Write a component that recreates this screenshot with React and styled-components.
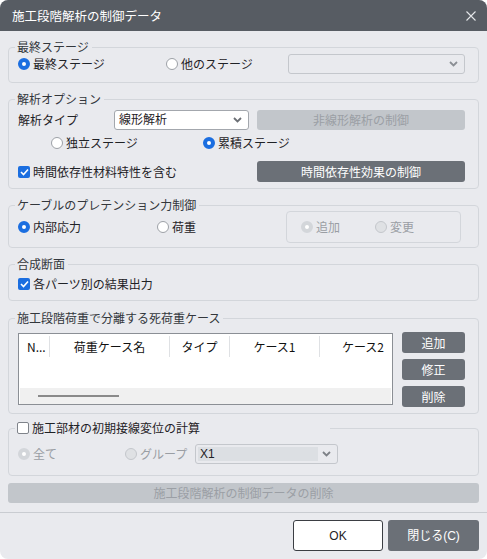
import React from "react";
import styled, { createGlobalStyle, css } from "styled-components";

const GlobalStyle = createGlobalStyle`
  html, body {
    margin: 0;
    background: #ffffff;
  }
  body {
    font-family: "Noto Sans CJK JP", "Noto Sans", sans-serif;
    font-size: 12px;
    line-height: 16px;
    color: #1f2226;
  }
`;

const Dialog = styled.div`
  width: 487px;
  height: 559px;
  background: #e9eaee;
  border-radius: 8px;
  overflow: hidden;
  display: flex;
  flex-direction: column;
`;

const TitleBar = styled.div`
  height: 31px;
  flex: none;
  background: #575c63;
  color: #ffffff;
  display: flex;
  align-items: center;
  justify-content: space-between;
  padding: 0 11px 0 12px;
  font-size: 12.5px;
`;

const Body = styled.div`
  padding: 9px 8px 9px;
  display: flex;
  flex-direction: column;
`;

// group box with caption on the border
const Group = styled.fieldset`
  margin: ${(p) => p.$mt || 0}px 0 0;
  padding: 0 13px ${(p) => p.$pb || 0}px 9px;
  border: 1px solid #d3d6db;
  border-radius: 4px;
  min-width: 0;
`;

const Caption = styled.legend`
  margin-left: -3px;
  padding: 0 3px 0 2px;
  line-height: 14px;
  color: #33373c;
  width: ${(p) => (p.$w ? `${p.$w}px` : "auto")};
  box-sizing: border-box;
  display: flex;
  align-items: center;
  gap: 3px;
`;

const Row = styled.div`
  display: grid;
  grid-template-columns: ${(p) => p.$cols || "1fr"};
  column-gap: ${(p) => p.$gap || 0}px;
  align-items: ${(p) => p.$align || "center"};
  height: ${(p) => p.$h}px;
  margin-top: ${(p) => p.$mt || 0}px;
  padding-left: ${(p) => p.$pl || 0}px;
`;

const Option = styled.span`
  display: inline-flex;
  align-items: center;
  gap: 3px;
  white-space: nowrap;
  color: ${(p) => (p.$disabled ? "#9a9ea4" : "#1f2226")};
`;

const Dot = styled.span`
  box-sizing: border-box;
  width: 12px;
  height: 12px;
  border-radius: 50%;
  flex: none;
  ${(p) =>
    p.$on
      ? css`
          border: 4px solid ${p.$disabled ? "#d3d6da" : "#1b6ee0"};
          background: #ffffff;
        `
      : css`
          border: 1px solid ${p.$disabled ? "#c4c7cc" : "#9da1a7"};
          background: ${p.$disabled ? "#dfe1e4" : "#ffffff"};
        `}
`;

const Box = styled.span`
  box-sizing: border-box;
  width: 12px;
  height: 12px;
  border-radius: 2px;
  flex: none;
  display: flex;
  align-items: center;
  justify-content: center;
  ${(p) =>
    p.$on
      ? css`
          background: #1b6ee0;
        `
      : css`
          background: #ffffff;
          border: 1px solid #7f838a;
        `}
`;

const Select = styled.div`
  box-sizing: border-box;
  height: 20px;
  display: flex;
  align-items: center;
  gap: 4px;
  padding: 0 6px 0 2px;
  border: 1px solid ${(p) => (p.$disabled ? "#c4c7cc" : "#a3a7ad")};
  border-radius: 3px;
  background: ${(p) => (p.$disabled ? "transparent" : "#ffffff")};
`;

const SelectValue = styled.span`
  flex: 1;
  height: 14px;
  line-height: 14px;
  padding-left: 2px;
  font-family: "Liberation Sans", "Noto Sans CJK JP", sans-serif;
  background: ${(p) => (p.$fill ? "#dcdfe3" : "transparent")};
  color: #1f2226;
`;

const Button = styled.button`
  box-sizing: border-box;
  height: ${(p) => p.$h || 20}px;
  margin: ${(p) => p.$mt || 0}px 0 0 ${(p) => p.$ml || 0}px;
  padding: 0;
  border: 0;
  border-radius: 3px;
  font: inherit;
  background: ${(p) => (p.disabled ? "#c2c6cb" : "#6b7077")};
  color: ${(p) => (p.disabled ? "#9b9fa5" : "#ffffff")};
`;

const InnerBox = styled.div`
  box-sizing: border-box;
  height: 32px;
  border: 1px solid #d3d6db;
  border-radius: 4px;
  display: grid;
  grid-template-columns: 74px 1fr;
  align-items: center;
  padding-left: 14px;
`;

const Table = styled.div`
  box-sizing: border-box;
  height: 72px;
  border: 1px solid #8b8f95;
  background: #ffffff;
  display: flex;
  flex-direction: column;
`;

const HeaderRow = styled.div`
  display: grid;
  grid-template-columns: 31px 120px 60px 90px 1fr;
  height: 24px;
  align-items: center;
  color: #111111;
`;

const HeaderCell = styled.div`
  height: 21px;
  line-height: 21px;
  text-align: ${(p) => p.$align || "center"};
  padding: 0 ${(p) => (p.$align === "right" ? 8 : 0)}px 0 ${(p) => (p.$align === "left" ? 8 : 0)}px;
  border-right: ${(p) => (p.$last ? "none" : "1px solid #dfe1e4")};
  white-space: nowrap;
  overflow: hidden;
`;

const TableFill = styled.div`
  flex: 1;
`;

const ScrollTrack = styled.div`
  height: 16px;
  margin: 0 1px;
  background: #f0f0f0;
  display: flex;
  align-items: center;
`;

const ScrollThumb = styled.div`
  height: 2px;
  width: 81px;
  margin-left: 18px;
  background: #8a8a8a;
`;

const SideButtons = styled.div`
  display: flex;
  flex-direction: column;
  gap: 6px;
  margin-top: -1px;
`;

const Footer = styled.div`
  border-top: 1px solid #c9ccd1;
  padding: 7px 8px 0;
  display: flex;
  justify-content: flex-end;
  gap: 5px;
`;

const FooterButton = styled.button`
  box-sizing: border-box;
  width: ${(p) => p.$w}px;
  height: 31px;
  border-radius: 3px;
  font: inherit;
  font-family: "Liberation Sans", "Noto Sans CJK JP", sans-serif;
  ${(p) =>
    p.$primary
      ? css`
          background: #ffffff;
          color: #1f2226;
          border: 1px solid #3b3e43;
        `
      : css`
          background: #6b7077;
          color: #ffffff;
          border: 0;
        `}
`;

const Chevron = ({ color = "#6b6f75" }) => (
  <svg width="9" height="6" viewBox="0 0 9 6">
    <path d="M1 1 L4.5 4.5 L8 1" fill="none" stroke={color} strokeWidth="1.8" />
  </svg>
);

const CloseIcon = () => (
  <svg width="10" height="10" viewBox="0 0 10 10">
    <path d="M0.5 0.5 L9.5 9.5 M9.5 0.5 L0.5 9.5" stroke="#e4e6e9" strokeWidth="1.1" />
  </svg>
);

const Radio = ({ on, disabled, children }) => (
  <Option $disabled={disabled}>
    <Dot $on={on} $disabled={disabled} />
    {children}
  </Option>
);

const Check = ({ on, children }) => (
  <Option>
    <Box $on={on}>
      {on && (
        <svg width="9" height="8" viewBox="0 0 9 8">
          <path d="M1 4 L3.5 6.5 L8 1.5" fill="none" stroke="#fff" strokeWidth="1.6" />
        </svg>
      )}
    </Box>
    {children}
  </Option>
);

const columns = [
  { label: "N...", align: "left" },
  { label: "荷重ケース名" },
  { label: "タイプ" },
  { label: "ケース1" },
  { label: "ケース2", align: "right", last: true },
];

export default function App() {
  return (
    <>
      <GlobalStyle />
      <Dialog>
        <TitleBar>
          <span>施工段階解析の制御データ</span>
          <CloseIcon />
        </TitleBar>
        <Body>
          <Group $pb={8}>
            <Caption>最終ステージ</Caption>
            <Row $h={20} $cols="148px 122px 1fr">
              <Radio on>最終ステージ</Radio>
              <Radio>他のステージ</Radio>
              <Select $disabled>
                <SelectValue />
                <Chevron color="#8b8f95" />
              </Select>
            </Row>
          </Group>

          <Group $mt={9} $pb={6}>
            <Caption>解析オプション</Caption>
            <Row $h={20} $mt={4} $cols="96px 135px 1fr">
              <span>解析タイプ</span>
              <Select>
                <SelectValue>線形解析</SelectValue>
                <Chevron />
              </Select>
              <Button disabled $ml={8}>
                非線形解析の制御
              </Button>
            </Row>
            <Row $h={18} $mt={4} $cols="152px 1fr" $pl={33}>
              <Radio>独立ステージ</Radio>
              <Radio on>累積ステージ</Radio>
            </Row>
            <Row $h={21} $mt={9} $cols="1fr 208px">
              <Check on>時間依存性材料特性を含む</Check>
              <Button $h={21}>時間依存性効果の制御</Button>
            </Row>
          </Group>

          <Group $mt={9} $pb={4}>
            <Caption>ケーブルのプレテンション力制御</Caption>
            <Row $h={32} $mt={-1} $cols="139px 129px 175px">
              <Radio on>内部応力</Radio>
              <Radio>荷重</Radio>
              <InnerBox>
                <Radio on disabled>
                  追加
                </Radio>
                <Radio disabled>変更</Radio>
              </InnerBox>
            </Row>
          </Group>

          <Group $mt={9} $pb={7}>
            <Caption>合成断面</Caption>
            <Row $h={18} $mt={4}>
              <Check on>各パーツ別の結果出力</Check>
            </Row>
          </Group>

          <Group $mt={10} $pb={8}>
            <Caption>施工段階荷重で分離する死荷重ケース</Caption>
            <Row $h={72} $mt={8} $cols="1fr 63px" $gap={9} $align="stretch">
              <Table>
                <HeaderRow>
                  {columns.map((c) => (
                    <HeaderCell key={c.label} $align={c.align} $last={c.last}>
                      {c.label}
                    </HeaderCell>
                  ))}
                </HeaderRow>
                <TableFill />
                <ScrollTrack>
                  <ScrollThumb />
                </ScrollTrack>
              </Table>
              <SideButtons>
                <Button $h={21}>追加</Button>
                <Button $h={21}>修正</Button>
                <Button $h={21}>削除</Button>
              </SideButtons>
            </Row>
          </Group>

          <Group $mt={7} $pb={11}>
            <Caption $w={315}>
              <Check>施工部材の初期接線変位の計算</Check>
            </Caption>
            <Row $h={20} $mt={9} $cols="107px 70px 143px">
              <Radio on disabled>
                全て
              </Radio>
              <Radio disabled>グループ</Radio>
              <Select $disabled>
                <SelectValue $fill>X1</SelectValue>
                <Chevron color="#7d8187" />
              </Select>
            </Row>
          </Group>

          <Button disabled $mt={7}>
            施工段階解析の制御データの削除
          </Button>
        </Body>
        <Footer>
          <FooterButton $primary $w={90}>
            OK
          </FooterButton>
          <FooterButton $w={91}>閉じる(C)</FooterButton>
        </Footer>
      </Dialog>
    </>
  );
}
